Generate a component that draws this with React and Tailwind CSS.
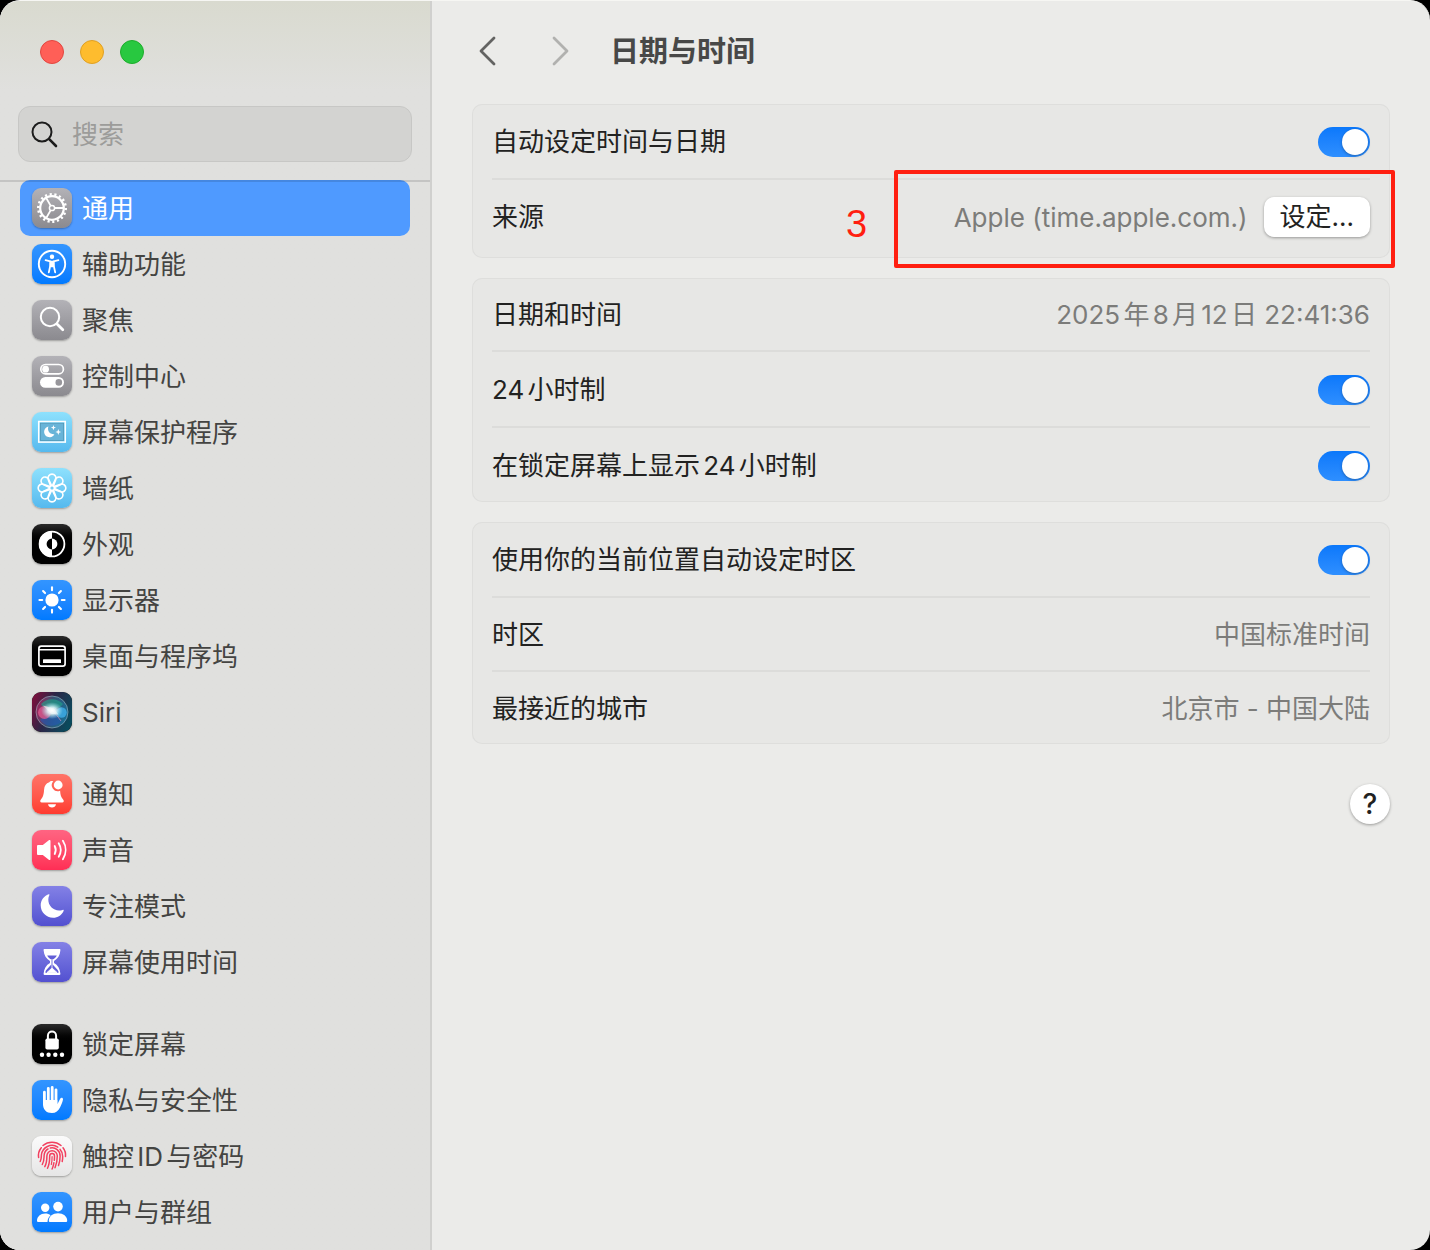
import React, { useState } from 'react';

const GRAY = 'from-[#b3b2b7] to-[#8b8a8f]';
const BLUE = 'from-[#3395ff] to-[#007aff]';
const SKY = 'from-[#8ee1fd] to-[#55b9ee]';
const BLACK = 'from-[#2b2b2b] to-black to-50%';
const INDIGO = 'from-[#8481e6] to-[#5350d0]';

const GearIcon = () => (
  <g fill="none" stroke="#fff">
    <circle cx="20" cy="20" r="13.7" strokeWidth="2.6" pathLength="36" strokeDasharray="0.9 1.1" />
    <circle cx="20" cy="20" r="11.8" strokeWidth="2.2" />
    <circle cx="20" cy="20" r="2.6" strokeWidth="1.5" />
    <path d="M22.8 20H32M18.6 17.6L14 9.6M18.6 22.4L14 30.4" strokeWidth="1.9" />
  </g>
);

const AccessibilityIcon = () => (
  <g fill="#fff">
    <circle cx="20" cy="20" r="13.2" fill="none" stroke="#fff" strokeWidth="1.9" />
    <circle cx="20" cy="12.8" r="2.2" />
    <path d="M13.6 16.2L18.3 17.3V21.5L16.8 28.4M26.4 16.2L21.7 17.3V21.5L23.200 28.4" fill="none" stroke="#fff" strokeWidth="1.8" strokeLinecap="round" strokeLinejoin="round" />
    <path d="M17.6 16.7h4.8v5.8l-1.6 .8h-1.6l-1.6-.8z" />
  </g>
);

const SpotlightIcon = () => (
  <g fill="none" stroke="#fff" strokeLinecap="round">
    <circle cx="18" cy="17" r="9.2" strokeWidth="2" />
    <path d="M25 24l5.8 5.8" strokeWidth="2.8" />
  </g>
);

const ControlCenterIcon = () => (
  <g>
    <rect x="8.8" y="8.5" width="22.6" height="9.4" rx="4.7" fill="none" stroke="#fff" strokeWidth="1.7" />
    <circle cx="13.6" cy="13.2" r="3.4" fill="#fff" />
    <rect x="8" y="21" width="24" height="10.8" rx="5.4" fill="#fff" />
    <circle cx="26.8" cy="26.4" r="3.3" fill="#97969b" />
  </g>
);

const ScreenSaverIcon = () => (
  <g>
    <rect x="6.7" y="9.5" width="26.6" height="20.6" fill="none" stroke="#fff" strokeWidth="1.5" />
    <rect x="8.4" y="11.2" width="23.2" height="17.2" fill="#68b4d8" stroke="#5296b4" strokeWidth="0.8" />
    <path d="M16.4 14.6a5.4 5.4 0 1 0 6 7.6 5.6 5.6 0 0 1-6-7.6z" fill="#fff" />
    <path d="M21.4 13l.7 1.9 1.9.7-1.9.7-.7 1.9-.7-1.9-1.9-.7 1.9-.7zM26.3 17l.8 2.2 2.2.8-2.2.8-.8 2.2-.8-2.2-2.2-.8 2.2-.8z" fill="#fff" />
  </g>
);

const WallpaperIcon = () => (
  <g fill="none" stroke="#fff" strokeWidth="1.6">
    {[0, 45, 90, 135, 180, 225, 270, 315].map((angle) => (
      <path key={angle} d="M18.6 18L16.2 11.4a4 4 0 1 1 7.6 0L21.4 18z" transform={`rotate(${angle} 20 20)`} />
    ))}
    <circle cx="20" cy="20" r="1.6" fill="#74cdf5" stroke="none" />
  </g>
);

const AppearanceIcon = () => (
  <g fill="#fff">
    <circle cx="20" cy="20" r="12.4" fill="none" stroke="#fff" strokeWidth="1.8" />
    <path d="M20 7a13 13 0 0 0 0 26v-7.6a5.4 5.4 0 0 1 0-10.8z" />
    <path d="M20 14.6a5.4 5.4 0 0 1 0 10.8z" />
  </g>
);

const DisplayIcon = () => (
  <g>
    <circle cx="20" cy="20" r="6.6" fill="#fff" />
    {[0, 45, 90, 135, 180, 225, 270, 315].map((angle) => (
      <path key={angle} d="M20 10.2V7.4" stroke="#fff" strokeWidth="2.1" strokeLinecap="round" transform={`rotate(${angle} 20 20)`} />
    ))}
  </g>
);

const DockIcon = () => (
  <g>
    <rect x="6.9" y="10.2" width="26.2" height="20" rx="2.4" fill="none" stroke="#fff" strokeWidth="1.7" />
    <path d="M7 13.8h26" stroke="#fff" strokeWidth="1.5" />
    <rect x="11" y="23.2" width="18" height="3.8" rx="0.6" fill="#fff" />
  </g>
);

const SiriIcon = () => (
  <g>
    <defs>
      <linearGradient id="siri-bg" x1="0" y1="0.2" x2="1" y2="0.6">
        <stop offset="0" stopColor="#7a0f3c" />
        <stop offset="0.45" stopColor="#2b2647" />
        <stop offset="1" stopColor="#0a4a5c" />
      </linearGradient>
      <linearGradient id="siri-orb" x1="0" y1="0.4" x2="1" y2="0.6">
        <stop offset="0" stopColor="#c42d6c" />
        <stop offset="0.45" stopColor="#3d6f8c" />
        <stop offset="1" stopColor="#1f8cc0" />
      </linearGradient>
      <radialGradient id="siri-glow">
        <stop offset="0" stopColor="#fff" />
        <stop offset="0.4" stopColor="#e8fbff" stopOpacity="0.85" />
        <stop offset="1" stopColor="#9be8f0" stopOpacity="0" />
      </radialGradient>
    </defs>
    <rect width="40" height="40" rx="9" fill="url(#siri-bg)" />
    <circle cx="20" cy="20" r="16" fill="url(#siri-orb)" fillOpacity="0.6" stroke="#9fb7c4" strokeOpacity="0.6" />
    <path d="M9 12a15 15 0 0 1 22 0c-4 6-9 3-12 6s-7-1-10-6z" fill="#1fa58a" fillOpacity="0.6" />
    <path d="M8 28c6-6 10-2 15-6l6 8a14 14 0 0 1-21-2z" fill="#2456b8" fillOpacity="0.55" />
    <circle cx="12.5" cy="20.5" r="6.5" fill="#ee5b93" fillOpacity="0.7" />
    <circle cx="29.5" cy="20.5" r="5.2" fill="#42b4f2" fillOpacity="0.75" />
    <path d="M20 18c3 3 6 7 9 11" stroke="#b98bc5" strokeOpacity="0.8" strokeWidth="1" fill="none" />
    <ellipse cx="20" cy="18.6" rx="11" ry="8.5" fill="url(#siri-glow)" />
    <path d="M11 13.500l11 3 4.500 6-7-.5z" fill="#fff" fillOpacity="0.5" />
  </g>
);

const BellIcon = () => (
  <g fill="#fff">
    <path d="M20 7a2.7 2.7 0 0 0-2.7 1.3c-3.3 1-5 3.7-5.2 7.3-.3 5-.9 7.2-3.2 9.9-1.2 1.5-.8 3 .9 3h20.4c1.7 0 2.100-1.5.9-3-2-2.4-2.7-4.400-3-8.8a6 6 0 0 1-6.8-9.5z" />
    <path d="M16 30.2h8c-.5 2.2-2 3.3-4 3.3s-3.5-1.1-4-3.3z" />
    <circle cx="26.2" cy="11" r="4.4" />
  </g>
);

const SoundIcon = () => (
  <g fill="none" stroke="#fff" strokeLinecap="round">
    <path d="M6.3 15h4.5l6-4.7c.9-.7 1.7-.3 1.7.8v17.8c0 1.1-.8 1.5-1.7.8l-6-4.7H6.3c-.8 0-1.3-.5-1.3-1.3v-7.4c0-.8.5-1.3 1.3-1.3z" fill="#fff" stroke="none" />
    <path d="M22.7 16c1.3 2.5 1.3 5.5 0 8M26.7 13.3c2.5 4 2.5 9.4 0 13.4M30.9 10.8c3.6 5.6 3.6 12.8 0 18.4" strokeWidth="1.8" />
  </g>
);

const FocusIcon = () => (
  <path d="M16.6 8.3c-4.7 1.7-7.9 6-7.9 11 0 7 5.5 12.4 12.4 12.4 4.7 0 8.6-2.6 10.5-6.8.3-.8-.2-1.3-1-1-7.5 2.3-14.5-3-14.3-10.6 0-1.5.4-2.7 1-4 .3-.7 0-1.2-.7-1z" fill="#fff" />
);

const HourglassIcon = () => (
  <g>
    <path d="M12.5 7h15c.7 0 1 .5.9 1.2-.4 5-2.6 8.6-6.4 10.7v2.2c3.8 2.1 6 5.7 6.4 10.7.1.7-.2 1.2-.9 1.2h-15c-.7 0-1-.5-.9-1.2.4-5 2.6-8.6 6.4-10.7v-2.2c-3.8-2.1-6-5.7-6.4-10.7-.1-.7.2-1.2.9-1.2z" fill="#fff" />
    <path d="M15.200 13.400h9.600c-.8 1.800-2.100 3-4.100 4.100v5l5 5.500c.7 1 .9 1.700.9 2.700H13.400c0-1 .2-1.700.9-2.700l5-5.500v-5c-2-1.100-3.300-2.300-4.100-4.100z" fill="#625fd7" />
    <path d="M20 17v9l-5 4.500h10L20 26" fill="#fff" stroke="#fff" strokeWidth="0.8" />
  </g>
);

const LockIcon = () => (
  <g fill="#fff">
    <path d="M15.9 15.5v-3.8a4.1 4.1 0 0 1 8.200 0v3.8" fill="none" stroke="#fff" strokeWidth="2" />
    <rect x="13.4" y="14.5" width="13.4" height="11" rx="1.8" />
    {[10, 16.6, 23.3, 30].map((cx) => (
      <circle key={cx} cx={cx} cy="30.8" r="2.2" />
    ))}
  </g>
);

const HandIcon = () => (
  <g fill="none" stroke="#fff" strokeLinecap="round">
    <path d="M12.4 12.2V24M16.3 8.3V22M20.2 7.4V22M24 9.8V24" strokeWidth="2.8" />
    <path d="M11 20h14.3v4.2c1-1.3 1.9-3.7 3-5.7.7-1.3 3-.8 2.7.9-.5 2.6-1.7 5.3-3 8-1.6 3.5-4.2 5.6-8.1 5.6-5.7 0-8.9-3.4-8.9-9z" fill="#fff" stroke="none" />
  </g>
);

const TouchIdIcon = () => (
  <g fill="none" stroke="#f2405f" strokeWidth="1.5" strokeLinecap="round">
    <path d="M11 9.500a14 14 0 0 1 18 0" />
    <path d="M6.600 21.500c-.6-3.600.4-7 2.700-9.800M31 11.800c2 2.500 2.800 5.600 2.500 8.700" />
    <path d="M8.200 25.500c1.400-2.500 1-4.500 1.200-6.500a10.700 10.700 0 0 1 16.400-7.900M28 13.200a10.700 10.700 0 0 1 2.700 7.300c0 2-.1 3.400-.5 5" />
    <path d="M10.300 28.500c2-3.500 1.700-6.500 1.800-9a8 8 0 0 1 3.900-6.500M18.300 12a8 8 0 0 1 9.800 8c0 3.500-.5 6.500-1.600 9.500" />
    <path d="M12.800 30.700c2-3.700 2.100-7.700 2.100-10.700a5.200 5.200 0 0 1 10.400 0c0 4.300-.7 8-2.300 11.800" />
    <path d="M15.500 32.300c1.800-3.800 2.200-8 2.200-12.300a2.400 2.400 0 0 1 4.800 0c0 1.500 0 2.800-.2 4.300M21.900 26.700a22 22 0 0 1-1.800 6.300" />
    <path d="M20.100 20.500c0 3-.2 5.500-.8 8" strokeWidth="1.200" />
  </g>
);

const UsersIcon = () => (
  <g fill="#fff">
    <circle cx="13.2" cy="15.7" r="4.2" />
    <path d="M6.5 30c-1 0-1.5-.5-1.5-1.5 0-3.7 3.5-7 8.2-7 2.2 0 4 .6 5.4 1.7-2 1.7-3 4-3.1 6.8z" />
    <circle cx="26" cy="14.600" r="4.8" />
    <path d="M18.3 30c-1 0-1.5-.5-1.5-1.5 0-4 4-7.2 9.2-7.2s9.200 3.2 9.200 7.2c0 1-.5 1.5-1.5 1.5z" />
  </g>
);

const menuGroups = [
  [
    { id: 'general', label: '通用', tile: GRAY, Icon: GearIcon },
    { id: 'accessibility', label: '辅助功能', tile: BLUE, Icon: AccessibilityIcon },
    { id: 'spotlight', label: '聚焦', tile: GRAY, Icon: SpotlightIcon },
    { id: 'control-center', label: '控制中心', tile: GRAY, Icon: ControlCenterIcon },
    { id: 'screen-saver', label: '屏幕保护程序', tile: SKY, Icon: ScreenSaverIcon },
    { id: 'wallpaper', label: '墙纸', tile: SKY, Icon: WallpaperIcon },
    { id: 'appearance', label: '外观', tile: BLACK, Icon: AppearanceIcon },
    { id: 'displays', label: '显示器', tile: BLUE, Icon: DisplayIcon },
    { id: 'dock', label: '桌面与程序坞', tile: BLACK, Icon: DockIcon },
    { id: 'siri', label: 'Siri', tile: BLACK, Icon: SiriIcon },
  ],
  [
    { id: 'notifications', label: '通知', tile: 'from-[#ff7468] to-[#ff3a2f]', Icon: BellIcon },
    { id: 'sound', label: '声音', tile: 'from-[#ff6482] to-[#ff2d55]', Icon: SoundIcon },
    { id: 'focus', label: '专注模式', tile: INDIGO, Icon: FocusIcon },
    { id: 'screen-time', label: '屏幕使用时间', tile: INDIGO, Icon: HourglassIcon },
  ],
  [
    { id: 'lock-screen', label: '锁定屏幕', tile: BLACK, Icon: LockIcon },
    { id: 'privacy', label: '隐私与安全性', tile: BLUE, Icon: HandIcon },
    { id: 'touch-id', label: '触控ID与密码', tile: 'from-[#fbfbfb] to-[#e6e6e6]', Icon: TouchIdIcon },
    { id: 'users', label: '用户与群组', tile: BLUE, Icon: UsersIcon },
  ],
];

const MenuItem = ({ item, active, onSelect }) => {
  const { id, label, tile, Icon } = item;
  return (
    <a
      href={`#${id}`}
      onClick={() => onSelect(id)}
      className={`flex h-14 items-center gap-2.5 rounded-[10px] px-3 ${active ? 'bg-[#4f9aff] text-white' : 'text-[#444442]'}`}
    >
      <span className={`size-10 shrink-0 overflow-hidden rounded-[9px] bg-linear-to-b shadow-[0_1px_2px_rgba(0,0,0,0.3)] ${tile}`}>
        <svg viewBox="0 0 40 40" className="size-10" aria-hidden="true">
          <Icon />
        </svg>
      </span>
      <span className="pt-0.5">{label}</span>
    </a>
  );
};

const Sidebar = () => {
  const [selected, setSelected] = useState('general');

  return (
    <aside className="w-[432px] shrink-0 border-r-2 border-[#d0d0ce] bg-[#e0e0de] bg-linear-to-b from-[#d9dacf] to-[#e0e0de] to-[90px]">
      <div className="relative z-10 border-b-2 border-black/12 px-[18px] pb-[18px]">
        <div className="flex h-[105px] items-center gap-4 px-[22px] pb-1">
          <button aria-label="关闭" className="size-6 rounded-full border border-[#e2463f] bg-[#ff5f57]" />
          <button aria-label="最小化" className="size-6 rounded-full border border-[#dfa023] bg-[#febc2e]" />
          <button aria-label="缩放" className="size-6 rounded-full border border-[#1dad2b] bg-[#28c840]" />
        </div>
        <label className="flex h-14 items-center gap-3.5 rounded-xl border border-[#c7c7c5] bg-[#d3d3d1] px-3">
          <svg viewBox="0 0 27 27" className="size-[27px] shrink-0" fill="none" stroke="#1c1c1c" strokeLinecap="round" aria-hidden="true">
            <circle cx="11" cy="11" r="9.5" strokeWidth="2" />
            <path d="M18.2 18.2l6.800 6.800" strokeWidth="2.600" />
          </svg>
          <input type="search" aria-label="搜索" placeholder="搜索" className="w-full min-w-0 bg-transparent pt-0.5 outline-none placeholder:text-[#9c9c9a]" />
        </label>
      </div>
      <nav className="-mt-0.5 flex flex-col gap-[26px] px-5 pb-2.5">
        {menuGroups.map((group, index) => (
          <div key={index}>
            {group.map((item) => (
              <MenuItem key={item.id} item={item} active={item.id === selected} onSelect={setSelected} />
            ))}
          </div>
        ))}
      </nav>
    </aside>
  );
};

const Toggle = ({ id }) => (
  <input
    id={id}
    type="checkbox"
    role="switch"
    defaultChecked
    className="flex h-[30px] w-[52px] shrink-0 appearance-none items-center rounded-full bg-[#c9c9c7] px-0.5 after:size-[26px] after:rounded-full after:bg-white after:shadow-[0_1px_3px_rgba(0,0,0,0.3)] checked:justify-end checked:bg-linear-to-b checked:from-[#0a78fb] checked:to-[#2e8fff]"
  />
);

const Card = ({ children }) => (
  <section className="rounded-[10px] bg-[#e7e7e5] px-5 shadow-[inset_0_0_0_1px_#dededc]">{children}</section>
);

const Row = ({ label, htmlFor, size = 'h-[74px] pt-0.5', divider = true, children }) => (
  <div className={`relative flex items-center justify-between gap-4 ${size} ${divider ? 'border-t-2 border-[#dcdcda]' : ''}`}>
    {htmlFor ? <label htmlFor={htmlFor}>{label}</label> : <span>{label}</span>}
    {children}
  </div>
);

const App = () => (
  <div className="bg-black font-['Inter','Noto_Sans_CJK_SC',sans-serif] text-[26px] leading-9 text-[#222221] [text-autospace:normal]">
    <div className="flex min-h-screen overflow-hidden rounded-[20px] border-t border-[#f6f6f3] bg-[#ebebe9]">
      <Sidebar />
      <main className="min-w-0 flex-1 px-10">
        <header className="flex h-[103px] items-center px-1.5 pb-1">
          <button aria-label="后退" className="mr-14">
            <svg viewBox="0 0 18 30" className="h-[30px] w-[18px]" fill="none" stroke="#636362" strokeWidth="2.8" strokeLinecap="round" strokeLinejoin="round">
              <path d="M16 2L3 15l13 13" />
            </svg>
          </button>
          <button aria-label="前进" className="mr-10" disabled>
            <svg viewBox="0 0 18 30" className="h-[30px] w-[18px]" fill="none" stroke="#b1b1af" strokeWidth="2.8" strokeLinecap="round" strokeLinejoin="round">
              <path d="M2 2l13 13L2 28" />
            </svg>
          </button>
          <h1 className="pt-0.5 text-[29px] font-bold text-[#484847]">日期与时间</h1>
        </header>

        <div className="flex flex-col gap-5">
          <Card>
            <Row label="自动设定时间与日期" htmlFor="auto-time" divider={false}>
              <Toggle id="auto-time" />
            </Row>
            <Row label="来源" size="h-20 pb-1">
              <div className="flex items-center gap-4">
                <span className="pt-0.5 text-[#7c7c7a]">Apple (time.apple.com.)</span>
                <button className="h-10 rounded-[10px] bg-white px-4 shadow-[0_1px_3px_rgba(0,0,0,0.35)]">设定...</button>
              </div>
              {/* Step marker drawn over the row */}
              <div className="pointer-events-none absolute -top-2.5 -right-[25px] h-[98px] w-[501px] rounded-xs border-4 border-[#ff1f10]">
                <span className="absolute top-[30px] -left-[52px] font-['Liberation_Sans',sans-serif] text-[38px] leading-10 text-[#ff1f10]">3</span>
              </div>
            </Row>
          </Card>

          <Card>
            <Row label="日期和时间" size="h-18 pt-0.5" divider={false}>
              <time dateTime="2025-08-12T22:41:36" className="text-[#7c7c7a]">2025年8月12日 22:41:36</time>
            </Row>
            <Row label="24小时制" htmlFor="use-24h" size="h-19 pt-0.5">
              <Toggle id="use-24h" />
            </Row>
            <Row label="在锁定屏幕上显示24小时制" htmlFor="lock-24h" size="h-19 pt-0.5">
              <Toggle id="lock-24h" />
            </Row>
          </Card>

          <Card>
            <Row label="使用你的当前位置自动设定时区" htmlFor="auto-zone" divider={false}>
              <Toggle id="auto-zone" />
            </Row>
            <Row label="时区">
              <span className="text-[#7c7c7a]">中国标准时间</span>
            </Row>
            <Row label="最接近的城市">
              <span className="text-[#7c7c7a]">北京市 - 中国大陆</span>
            </Row>
          </Card>
        </div>

        <div className="mt-10 flex justify-end">
          <button aria-label="帮助" className="size-10 rounded-full bg-white text-[28px] font-medium shadow-[0_1px_3px_rgba(0,0,0,0.35)]">?</button>
        </div>
      </main>
    </div>
  </div>
);

export default App;
